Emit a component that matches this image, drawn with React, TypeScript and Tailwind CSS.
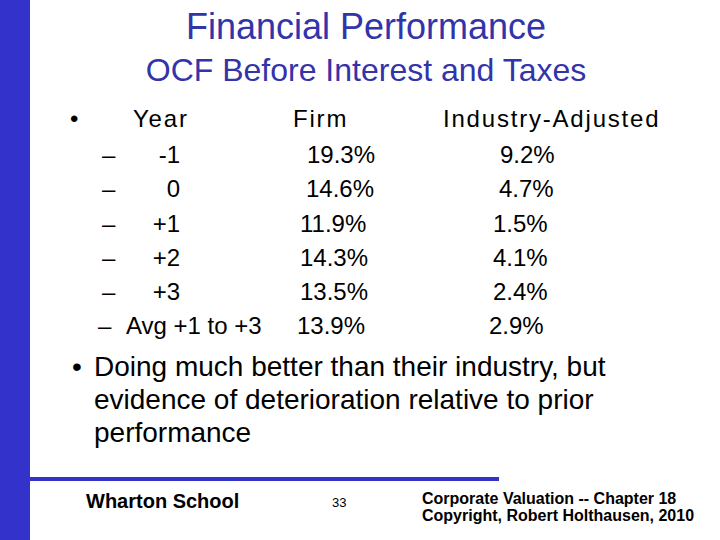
import React from "react";

const rows = [
  { y: "-1", firm: "19.3%", ind: "9.2%", fp: "pl-[127px]", ip: "pl-[120px]" },
  { y: "0", firm: "14.6%", ind: "4.7%", fp: "pl-[126px]", ip: "pl-[119px]" },
  { y: "+1", firm: "11.9%", ind: "1.5%", fp: "pl-[120px]", ip: "pl-[113px]" },
  { y: "+2", firm: "14.3%", ind: "4.1%", fp: "pl-[120px]", ip: "pl-[113px]" },
  { y: "+3", firm: "13.5%", ind: "2.4%", fp: "pl-[120px]", ip: "pl-[113px]" },
];

export default function App() {
  return (
    <div
      className="w-[720px] h-[540px] flex bg-white text-black overflow-hidden"
      style={{ fontFamily: '"Liberation Sans", Arial, sans-serif' }}
    >
      <div className="w-[30px] h-full bg-[#3333cc] shrink-0" />
      <div className="flex-1 flex flex-col">
        <div className="mt-[7px] pr-[18px] text-center text-[36px] leading-[40px] text-[#3333aa]">
          Financial Performance
        </div>
        <div className="mt-[5px] pr-[18px] text-center text-[32px] leading-[36px] text-[#3333aa]">
          OCF Before Interest and Taxes
        </div>

        <div className="mt-[14px] pl-[40px] flex text-[24px] leading-[34px] tracking-[1.8px]">
          <div className="w-[63px]">•</div>
          <div className="w-[160px]">Year</div>
          <div className="w-[150px]">Firm</div>
          <div>Industry-Adjusted</div>
        </div>

        <div className="mt-[2px] flex flex-col text-[24px] leading-[34.25px]">
          {rows.map((r) => (
            <div key={r.y} className="flex">
              <div className="w-[150px] shrink-0 flex pl-[72px]">
                <span className="w-[13px] shrink-0">–</span>
                <span className="flex-1 text-right">{r.y}</span>
              </div>
              <div className={`w-[200px] shrink-0 ${r.fp}`}>{r.firm}</div>
              <div className={r.ip}>{r.ind}</div>
            </div>
          ))}
          <div className="flex">
            <div className="w-[232px] shrink-0 pl-[68px] flex whitespace-nowrap">
              <span className="w-[28px] shrink-0">–</span>
              <span>Avg +1 to +3</span>
            </div>
            <div className="w-[118px] shrink-0 pl-[35px]">13.9%</div>
            <div className="pl-[109px]">2.9%</div>
          </div>
        </div>

        <div className="mt-[6px] pl-[42px] flex text-[28px] leading-[33px]">
          <div className="w-[22px]">•</div>
          <div>
            Doing much better than their industry, but
            <br />
            evidence of deterioration relative to prior
            <br />
            performance
          </div>
        </div>

        <div className="mt-[28.5px] w-[469px] h-[4px] bg-[#3333cc]" />

        <div className="flex items-start">
          <div className="mt-[10px] pl-[56px] w-[302px] text-[20px] leading-[20px] font-bold">
            Wharton School
          </div>
          <div className="mt-[15px] w-[90px] text-[13px] leading-[13px]">33</div>
          <div className="mt-[9px] text-[16px] leading-[17px] font-bold">
            Corporate Valuation -- Chapter 18
            <br />
            Copyright, Robert Holthausen, 2010
          </div>
        </div>
      </div>
    </div>
  );
}
